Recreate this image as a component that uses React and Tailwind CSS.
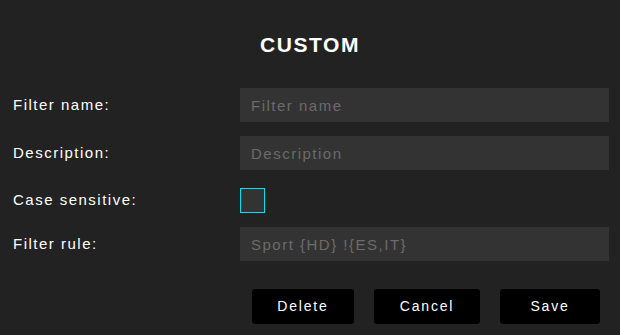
export default function App() {
  const font = { fontFamily: '"Liberation Sans", Arial, sans-serif' };

  return (
    <div className="w-[620px] h-[335px] bg-[#222222] text-white overflow-hidden" style={font}>
      <h1 className="pt-[33px] text-center text-[21px] leading-[24px] font-bold tracking-[1.6px] pl-[0px]">CUSTOM</h1>

      <form className="mt-[31px] flex flex-col pl-[13px] pr-[11px]">
        <div className="flex items-center">
          <label className="w-[227px] text-[15px] tracking-[1.5px]">Filter name:</label>
          <input
            placeholder="Filter name"
            className="flex-1 h-[34px] bg-[#333333] px-[11px] text-[15px] tracking-[1.5px] outline-none placeholder:text-[#6b6b6b]"
          />
        </div>

        <div className="flex items-center mt-[14px]">
          <label className="w-[227px] text-[15px] tracking-[1.5px]">Description:</label>
          <input
            placeholder="Description"
            className="flex-1 h-[34px] bg-[#333333] px-[11px] text-[15px] tracking-[1.5px] outline-none placeholder:text-[#6b6b6b]"
          />
        </div>

        <div className="flex items-center mt-[18px]">
          <label className="w-[227px] text-[15px] tracking-[1.5px]">Case sensitive:</label>
          <div className="w-[25px] h-[25px] bg-[#333333] border border-[#00e1ff]"></div>
        </div>

        <div className="flex items-center mt-[14px]">
          <label className="w-[227px] text-[15px] tracking-[1.5px]">Filter rule:</label>
          <input
            placeholder="Sport {HD} !{ES,IT}"
            className="flex-1 h-[34px] bg-[#333333] px-[11px] text-[15px] tracking-[1.5px] outline-none placeholder:text-[#6b6b6b]"
          />
        </div>

        <div className="flex justify-end gap-[20px] mt-[28px] pr-[9px]">
          <button type="button" className="w-[102px] h-[35px] bg-black rounded-[3px] text-[14px] tracking-[1.8px]">Delete</button>
          <button type="button" className="w-[106px] h-[35px] bg-black rounded-[3px] text-[14px] tracking-[1.8px]">Cancel</button>
          <button type="button" className="w-[100px] h-[35px] bg-black rounded-[3px] text-[14px] tracking-[1.8px]">Save</button>
        </div>
      </form>
    </div>
  );
}
